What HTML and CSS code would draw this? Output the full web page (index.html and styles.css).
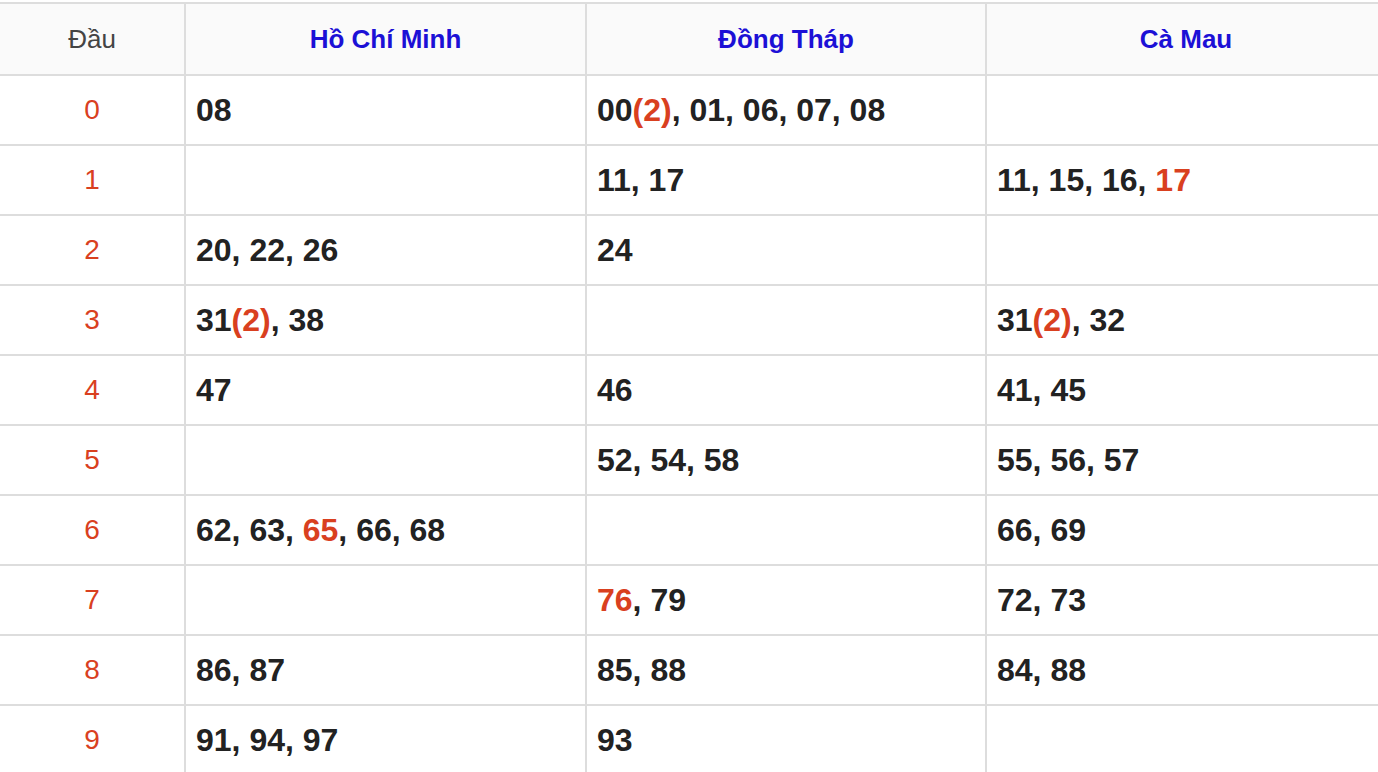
FILE: index.html
```html
<!DOCTYPE html>
<html lang="vi">
<head>
<meta charset="utf-8">
<title>Loto theo đầu</title>
<link rel="stylesheet" href="styles.css">
</head>
<body>
<table class="loto">
  <thead>
    <tr>
      <th class="c-head c1">Đầu</th>
      <th class="c-head prov c2">Hồ Chí Minh</th>
      <th class="c-head prov c3">Đồng Tháp</th>
      <th class="c-head prov c4">Cà Mau</th>
    </tr>
  </thead>
  <tbody>
    <tr><td class="dau">0</td><td class="nums">08</td><td class="nums">00<span class="hl">(2)</span>, 01, 06, 07, 08</td><td class="nums"></td></tr>
    <tr><td class="dau">1</td><td class="nums"></td><td class="nums">11, 17</td><td class="nums">11, 15, 16, <span class="hl">17</span></td></tr>
    <tr><td class="dau">2</td><td class="nums">20, 22, 26</td><td class="nums">24</td><td class="nums"></td></tr>
    <tr><td class="dau">3</td><td class="nums">31<span class="hl">(2)</span>, 38</td><td class="nums"></td><td class="nums">31<span class="hl">(2)</span>, 32</td></tr>
    <tr><td class="dau">4</td><td class="nums">47</td><td class="nums">46</td><td class="nums">41, 45</td></tr>
    <tr><td class="dau">5</td><td class="nums"></td><td class="nums">52, 54, 58</td><td class="nums">55, 56, 57</td></tr>
    <tr><td class="dau">6</td><td class="nums">62, 63, <span class="hl">65</span>, 66, 68</td><td class="nums"></td><td class="nums">66, 69</td></tr>
    <tr><td class="dau">7</td><td class="nums"></td><td class="nums"><span class="hl">76</span>, 79</td><td class="nums">72, 73</td></tr>
    <tr><td class="dau">8</td><td class="nums">86, 87</td><td class="nums">85, 88</td><td class="nums">84, 88</td></tr>
    <tr><td class="dau">9</td><td class="nums">91, 94, 97</td><td class="nums">93</td><td class="nums"></td></tr>
  </tbody>
</table>
</body>
</html>
```

FILE: styles.css
```css
html, body {
  margin: 0;
  padding: 0;
  overflow: hidden;
  background: #ffffff;
}

body {
  font-family: "Liberation Sans", Arial, sans-serif;
  width: 1378px;
  height: 772px;
}

.loto {
  border-collapse: separate;
  border-spacing: 0;
  table-layout: fixed;
  width: 1389px;
  margin: 2px 0 0 -2px;
  border-top: 2px solid #dddddd;
  border-left: 2px solid #dddddd;
}

.loto th,
.loto td {
  box-sizing: border-box;
  border-right: 2px solid #dddddd;
  border-bottom: 2px solid #dddddd;
  padding: 0;
  vertical-align: middle;
}

.c1 { width: 186px; }
.c2 { width: 401px; }
.c3 { width: 400px; }
.c4 { width: 400px; }

.c-head {
  height: 72px;
  background: #fafafa;
  text-align: center;
  font-size: 26px;
  font-weight: normal;
  color: #444444;
}

.prov {
  font-weight: bold;
  color: #1c10d6;
}

.loto tbody td {
  height: 70px;
}

.dau {
  text-align: center;
  font-size: 28px;
  color: #d9401f;
}

.nums {
  padding-left: 10px !important;
  font-size: 32px;
  font-weight: bold;
  color: #222222;
  white-space: nowrap;
}

.hl {
  color: #d9401f;
}
```
